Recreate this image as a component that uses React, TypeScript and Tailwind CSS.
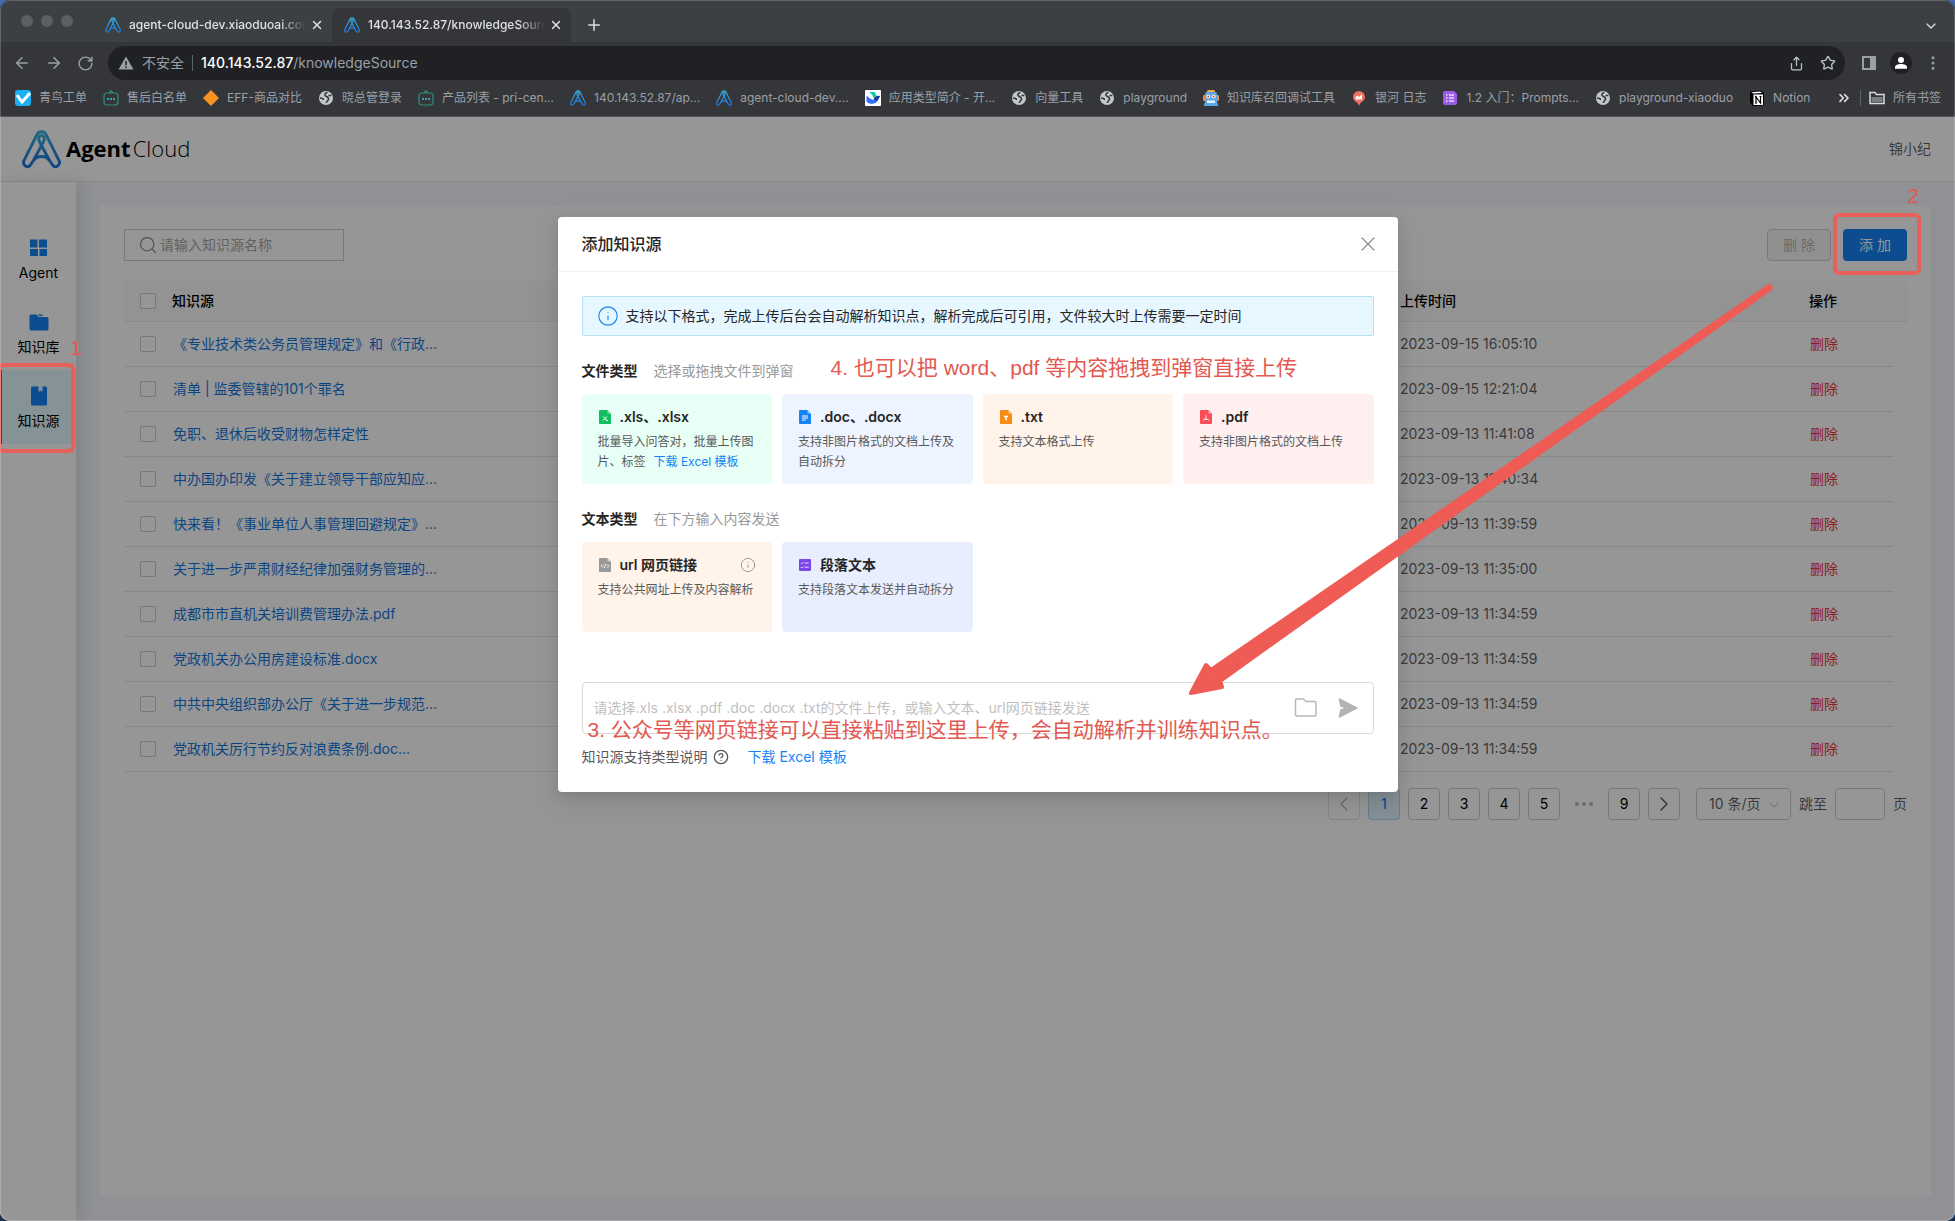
import { useState } from "react";
import type { ReactNode } from "react";
import {
  ArrowLeft,
  ArrowRight,
  ChevronDown,
  ChevronLeft,
  ChevronRight,
  ChevronsRight,
  CircleHelp,
  EllipsisVertical,
  Info,
  Plus,
  RotateCw,
  Search,
  Share,
  Star,
  X,
} from "lucide-react";

type Bookmark = { label: string; icon: ReactNode };
type Source = { name: string; time: string };

const sources: Source[] = [
  { name: "《专业技术类公务员管理规定》和《行政...", time: "2023-09-15 16:05:10" },
  { name: "清单 | 监委管辖的101个罪名", time: "2023-09-15 12:21:04" },
  { name: "免职、退休后收受财物怎样定性", time: "2023-09-13 11:41:08" },
  { name: "中办国办印发《关于建立领导干部应知应...", time: "2023-09-13 11:40:34" },
  { name: "快来看！《事业单位人事管理回避规定》...", time: "2023-09-13 11:39:59" },
  { name: "关于进一步严肃财经纪律加强财务管理的...", time: "2023-09-13 11:35:00" },
  { name: "成都市市直机关培训费管理办法.pdf", time: "2023-09-13 11:34:59" },
  { name: "党政机关办公用房建设标准.docx", time: "2023-09-13 11:34:59" },
  { name: "中共中央组织部办公厅《关于进一步规范...", time: "2023-09-13 11:34:59" },
  { name: "党政机关厉行节约反对浪费条例.doc...", time: "2023-09-13 11:34:59" },
];

const bookmarks: Bookmark[] = [
  { label: "青鸟工单", icon: <CheckIcon /> },
  { label: "售后白名单", icon: <BotIcon /> },
  { label: "EFF-商品对比", icon: <DiamondIcon /> },
  { label: "晓总管登录", icon: <GlobeIcon /> },
  { label: "产品列表 - pri-cen...", icon: <BotIcon /> },
  { label: "140.143.52.87/ap...", icon: <AgentLogo className="size-4" /> },
  { label: "agent-cloud-dev....", icon: <AgentLogo className="size-4" /> },
  { label: "应用类型简介 - 开...", icon: <FeishuIcon /> },
  { label: "向量工具", icon: <GlobeIcon /> },
  { label: "playground", icon: <GlobeIcon /> },
  { label: "知识库召回调试工具", icon: <RobotIcon /> },
  { label: "银河 日志", icon: <BalloonIcon /> },
  { label: "1.2 入门：Prompts...", icon: <FormIcon /> },
  { label: "playground-xiaoduo", icon: <GlobeIcon /> },
  { label: "Notion", icon: <NotionIcon /> },
];

export default function App() {
  return (
    <div className="flex min-h-screen flex-col bg-linear-to-b from-[#3f6cae] to-[#1b3350] font-['Inter','Noto_Sans_CJK_SC',sans-serif]">
      <div className="relative flex flex-1 flex-col overflow-hidden rounded-[10px]">
        <BrowserChrome />
        <div className="relative flex flex-1 flex-col bg-white text-sm">
          <Header />
          <div className="flex flex-1">
            <Sidebar />
            <main className="flex min-w-0 flex-1 bg-[#f4f7fc] px-6 pb-6 pt-[23px]">
              <SourceList />
            </main>
          </div>
          <div className="absolute inset-0 flex items-start justify-center bg-black/41 pt-[100px]">
            <UploadDialog />
          </div>
        </div>
        <Annotations />
        <div className="pointer-events-none absolute inset-0 rounded-[10px] border border-white/20" />
      </div>
    </div>
  );
}

function BrowserChrome() {
  return (
    <div className="bg-[#35363a] text-[#9aa0a6]">
      <div className="flex h-[42px] items-end bg-[#3c4043] pr-4">
        <div className="flex h-[42px] w-[93px] items-center gap-2 pl-[21px]">
          <span className="size-3 rounded-full bg-[#5c5f62]" />
          <span className="size-3 rounded-full bg-[#5c5f62]" />
          <span className="size-3 rounded-full bg-[#5c5f62]" />
        </div>
        <Tab title="agent-cloud-dev.xiaoduoai.com" />
        <Tab title="140.143.52.87/knowledgeSource" active />
        <button aria-label="新标签页" className="mb-2 ml-[14px] text-[#dadce0]">
          <Plus className="size-[18px]" />
        </button>
        <button aria-label="搜索标签页" className="mb-2 ml-auto text-[#dadce0]">
          <ChevronDown className="size-4" />
        </button>
      </div>

      <div className="flex h-[42px] items-center px-3">
        <button aria-label="后退" className="w-8 pl-px">
          <ArrowLeft className="size-[18px]" />
        </button>
        <button aria-label="前进" className="w-8 pl-px">
          <ArrowRight className="size-[18px]" />
        </button>
        <button aria-label="刷新" className="w-8 pl-px">
          <RotateCw className="size-[17px]" />
        </button>
        <div className="flex h-[34px] flex-1 items-center rounded-full bg-[#202124] pl-[10px] pr-px text-sm">
          <svg viewBox="0 0 16 16" className="size-4">
            <path d="M8 1.5 15.5 14.5H.5Z" fill="#9aa0a6" />
            <path d="M8 6v4.2M8 11.4v1.5" stroke="#202124" strokeWidth="1.5" />
          </svg>
          <span className="ml-2">不安全</span>
          <span className="mx-2 h-4 w-px bg-[#5f6368]" />
          <span>
            <span className="font-medium text-white">140.143.52.87</span>/knowledgeSource
          </span>
          <button aria-label="分享" className="ml-auto flex w-8 justify-center text-[#bdc1c6]">
            <Share className="size-[15px]" />
          </button>
          <button aria-label="收藏" className="flex w-8 justify-center text-[#bdc1c6]">
            <Star className="size-4" />
          </button>
        </div>
        <button aria-label="侧边栏" className="ml-2 flex w-8 justify-center">
          <svg viewBox="0 0 14 14" className="size-[14px]">
            <path d="M0 0h14v14H0zM2 2v10h6V2z" fill="#9aa0a6" fillRule="evenodd" />
          </svg>
        </button>
        <button aria-label="用户" className="flex w-8 justify-center">
          <svg viewBox="0 0 22 22" className="size-[22px]">
            <circle cx="11" cy="11" r="11" fill="#202124" />
            <circle cx="11" cy="8" r="3" fill="#fff" />
            <path d="M5 16.8v-1.6c0-2 3-3.2 6-3.2s6 1.2 6 3.2v1.6Z" fill="#fff" />
          </svg>
        </button>
        <button aria-label="更多" className="-mr-[6px] flex w-8 justify-center">
          <EllipsisVertical className="size-[18px]" />
        </button>
      </div>

      <nav className="flex h-[33px] items-center gap-4 border-b border-[#55575b] pb-1 pl-[15px] pr-[14px] text-xs">
        {bookmarks.map((b, i) => (
          <a key={i} href="#" className="flex shrink-0 items-center gap-2 whitespace-nowrap">
            {b.icon}
            {b.label}
          </a>
        ))}
        <div className="ml-auto flex shrink-0 items-center gap-2">
          <ChevronsRight className="size-4 text-[#dadce0]" strokeWidth={2.5} />
          <span className="h-4 w-px bg-[#5f6368]" />
          <a href="#" className="flex items-center gap-2">
            <svg viewBox="0 0 16 16" className="size-4">
              <path d="M1 2.5h5l1.5 2H15v9H1z" fill="none" stroke="#dadce0" strokeWidth="1.5" />
              <path d="M2.5 7h11v5h-11z" fill="#7b7e82" />
            </svg>
            所有书签
          </a>
        </div>
      </nav>
    </div>
  );
}

function Tab({ title, active = false }: { title: string; active?: boolean }) {
  return (
    <div
      className={`flex h-[34px] w-[239px] items-center rounded-t-lg pl-3 pr-2 text-xs font-medium text-[#dfe1e5] ${
        active ? "bg-[#35363a]" : ""
      }`}
    >
      <AgentLogo className="size-4 shrink-0" />
      <span className="ml-2 flex-1 overflow-hidden whitespace-nowrap mask-r-from-85% mask-r-to-100%">{title}</span>
      <button aria-label="关闭标签页" className="ml-1">
        <X className="size-[14px]" strokeWidth={2.5} />
      </button>
    </div>
  );
}

function Header() {
  return (
    <header className="flex h-[65px] items-center border-b border-[#e8e8e8] pl-[22px] pr-6">
      <AgentLogo className="size-[39px]" />
      <div className="ml-[5px] font-['Open_Sans',sans-serif] text-[22px] text-black">
        <span className="font-bold">Agent</span>
        <span className="ml-0.5 font-light">Cloud</span>
      </div>
      <span className="ml-auto text-black/65">锦小纪</span>
    </header>
  );
}

function Sidebar() {
  return (
    <aside className="relative w-[76px] shrink-0 bg-white pt-10 shadow-[4px_0_16px_rgba(0,21,41,0.12)]">
      <NavItem label="Agent">
        <path d="M1 1.5h7.5v8H1zM10 1.5h8v8h-8zM1 11h8v7H1zM10.5 11H18v7h-7.500z" />
      </NavItem>
      <NavItem label="知识库">
        <path d="M2 2.500h5.500l2.200 2.500H18a1.500 1.500 0 0 1 1.500 1.500V17A1.500 1.500 0 0 1 18 18.500H2A1.500 1.500 0 0 1 .5 17V4A1.500 1.500 0 0 1 2 2.500zM9 2.500h4.500V4h-3.200z" />
      </NavItem>
      <NavItem label="知识源" active>
        <path d="M3.500.5H9.500v5.500l2-1.500 2 1.500V.5h3A1.500 1.500 0 0 1 18 2v16a1.500 1.500 0 0 1-1.500 1.500h-13A1.500 1.500 0 0 1 2 18V2A1.500 1.500 0 0 1 3.500.5z" />
      </NavItem>
    </aside>
  );
}

function NavItem({ label, active = false, children }: { label: string; active?: boolean; children: ReactNode }) {
  return (
    <a
      href="#"
      className={`flex h-[74px] flex-col items-center border-l-2 pr-px pt-4 text-black ${
        active ? "border-[#1484f5] bg-[#e3f9ff]" : "border-transparent"
      }`}
    >
      <svg viewBox="0 0 20 20" className="size-5 fill-[#1484f5]">
        {children}
      </svg>
      <span className="mt-1 leading-[22px]">{label}</span>
    </a>
  );
}

function SourceList() {
  const [selected, setSelected] = useState<string[]>([]);

  const toggle = (name: string) =>
    setSelected(selected.includes(name) ? selected.filter((n) => n !== name) : [...selected, name]);

  return (
    <section className="flex-1 rounded bg-white p-6">
      <div className="flex items-center gap-3">
        <label className="mr-auto flex h-8 w-[220px] items-center gap-0.5 border border-[#d0d0d0] pl-[13px]">
          <Search className="size-5 shrink-0 text-[#8c8c8c]" strokeWidth={1.5} />
          <input
            type="text"
            aria-label="知识源名称"
            placeholder="请输入知识源名称"
            className="w-full outline-none placeholder:text-[#a6a6a6]"
          />
        </label>
        <button disabled className="h-8 w-16 rounded border border-[#d0d0d0] bg-[#f5f5f5] text-black/30">
          删 除
        </button>
        <button className="h-8 w-16 rounded bg-[#1484f5] text-white">添 加</button>
      </div>

      <table className="mt-5 w-full table-fixed border-separate border-spacing-0 text-left">
        <thead>
          <tr className="h-[41px] text-black *:border-b *:border-[#ececec] *:bg-[#fafafa]">
            <th className="w-12 pl-4">
              <Checkbox label="全选" />
            </th>
            <th className="font-medium">知识源</th>
            <th className="w-[23%] pl-[17px] font-medium">上传时间</th>
            <th className="w-[100px] pl-4 font-medium">操作</th>
            <th className="w-[14px]" />
          </tr>
        </thead>
        <tbody>
          {sources.map((s) => (
            <tr key={s.name} className="h-[45px]">
              <td className="border-b border-[#e6e6e6] pl-4">
                <Checkbox label={s.name} checked={selected.includes(s.name)} onChange={() => toggle(s.name)} />
              </td>
              <td className="border-b border-[#e6e6e6] pl-px">
                <a href="#" className="text-[#1677dd]">
                  {s.name}
                </a>
              </td>
              <td className="border-b border-[#e6e6e6] pl-[17px] text-black/65">{s.time}</td>
              <td className="border-b border-[#e6e6e6] pl-[17px]">
                <button className="text-[#f0343c]">删除</button>
              </td>
              <td />
            </tr>
          ))}
        </tbody>
      </table>

      <Pagination />
    </section>
  );
}

function Checkbox({ label, checked = false, onChange }: { label: string; checked?: boolean; onChange?: () => void }) {
  return (
    <input
      type="checkbox"
      aria-label={label}
      checked={checked}
      onChange={onChange ?? (() => {})}
      className="block size-4 appearance-none rounded-xs border border-[#ccc] bg-white checked:bg-[#1484f5]"
    />
  );
}

function Pagination() {
  const page = "flex size-8 items-center justify-center rounded border";

  return (
    <div className="mt-4 flex items-center justify-end gap-2 text-black">
      <button disabled aria-label="上一页" className={`${page} border-[#e0e0e0] text-black/30`}>
        <ChevronLeft className="size-6" strokeWidth={1.25} />
      </button>
      <button className={`${page} border-[#a8d8ee] bg-[#e0f5ff] font-medium text-[#1484f5]`}>1</button>
      {["2", "3", "4", "5"].map((n) => (
        <button key={n} className={`${page} border-[#d0d0d0]`}>
          {n}
        </button>
      ))}
      <span className="flex size-8 items-center justify-center gap-[3px]">
        <i className="size-1 rounded-full bg-[#b8b8b8]" />
        <i className="size-1 rounded-full bg-[#b8b8b8]" />
        <i className="size-1 rounded-full bg-[#b8b8b8]" />
      </span>
      <button className={`${page} border-[#d0d0d0]`}>9</button>
      <button aria-label="下一页" className={`${page} border-[#d0d0d0] text-black/70`}>
        <ChevronRight className="size-6" strokeWidth={1.25} />
      </button>
      <div className="relative ml-2">
        <select
          aria-label="每页条数"
          className="h-8 w-[95px] appearance-none rounded border border-[#d0d0d0] bg-white pl-3 text-black/65"
        >
          <option>10 条/页</option>
          <option>20 条/页</option>
        </select>
        <ChevronDown className="pointer-events-none absolute right-2 top-2 size-[18px] text-[#b0b0b0]" strokeWidth={1.25} />
      </div>
      <label htmlFor="jump" className="text-black/65">
        跳至
      </label>
      <input id="jump" type="text" className="h-8 w-[50px] rounded border border-[#d0d0d0] px-2" />
      <span className="text-black/65">页</span>
    </div>
  );
}

function UploadDialog() {
  return (
    <div
      role="dialog"
      aria-label="添加知识源"
      className="w-[840px] rounded-sm bg-white text-[#262626] shadow-[0_3px_6px_-4px_rgba(0,0,0,0.12),0_6px_16px_rgba(0,0,0,0.08),0_9px_28px_8px_rgba(0,0,0,0.05)]"
    >
      <div className="flex h-[55px] items-center justify-between border-b border-[#f0f0f0] px-6">
        <h2 className="text-base font-medium">添加知识源</h2>
        <button aria-label="关闭" className="-mr-[6px] text-[#8c8c8c]">
          <X className="size-6" strokeWidth={1.25} />
        </button>
      </div>

      <div className="px-6 pb-[25px] pt-6">
        <div className="flex h-10 items-center gap-[7px] rounded-xs border border-[#b7e0f2] bg-[#e6f7ff] px-[14px]">
          <Info className="size-[22px] text-[#1484f5]" strokeWidth={1.25} />
          支持以下格式，完成上传后台会自动解析知识点，解析完成后可引用，文件较大时上传需要一定时间
        </div>

        <SectionTitle title="文件类型" hint="选择或拖拽文件到弹窗" />
        <div className="mt-3 grid grid-cols-4 gap-[10px]">
          <TypeCard
            color="bg-[#e8fff6]"
            title=".xls、.xlsx"
            icon={
              <FileIcon color="#0fbf60">
                <path d="m4 6.5 4 4M8 6.5l-4 4M7 10.5h2" />
              </FileIcon>
            }
          >
            批量导入问答对，批量上传图片、标签
            <a href="#" className="ml-2 text-[#1484f5]">
              下载 Excel 模板
            </a>
          </TypeCard>
          <TypeCard
            color="bg-[#edf4ff]"
            title=".doc、.docx"
            icon={
              <FileIcon color="#1484f5">
                <path d="M3 6h6M3 8h6M3 10h3.5" />
              </FileIcon>
            }
          >
            支持非图片格式的文档上传及自动拆分
          </TypeCard>
          <TypeCard
            color="bg-[#fff3ea]"
            title=".txt"
            icon={
              <FileIcon color="#fa8c16">
                <path d="M4 6.5h4M6 6.5v4" strokeWidth="1.5" />
              </FileIcon>
            }
          >
            支持文本格式上传
          </TypeCard>
          <TypeCard
            color="bg-[#ffefef]"
            title=".pdf"
            icon={
              <FileIcon color="#fa4d56">
                <path d="M6 5v2.500L3 10.500M6 7.500c.6 1.800 1.800 2.500 3.500 2.500M4 9.500h3.500" strokeWidth=".8" />
              </FileIcon>
            }
          >
            支持非图片格式的文档上传
          </TypeCard>
        </div>

        <SectionTitle title="文本类型" hint="在下方输入内容发送" />
        <div className="mt-3 grid grid-cols-4 gap-[10px]">
          <TypeCard
            color="bg-[#fff3ea]"
            title="url 网页链接"
            info
            icon={
              <FileIcon color="#999">
                <path d="M3.800 6.500 2.300 8l1.500 1.500M8.200 6.500 9.700 8 8.200 9.500M6.600 6 5.400 10" strokeWidth=".9" />
              </FileIcon>
            }
          >
            支持公共网址上传及内容解析
          </TypeCard>
          <TypeCard
            color="bg-[#e9eeff]"
            title="段落文本"
            icon={
              <svg viewBox="0 0 12 14" className="h-[14px] w-3 shrink-0">
                <rect y="1" width="12" height="12" rx="1" fill="#7b45e8" />
                <path d="m2 5 .8.8L4.300 4.300M2 9.200l.8.8 1.500-1.500M5.500 5h4.200M5.500 9.200h4.200" stroke="#fff" strokeWidth=".8" fill="none" />
              </svg>
            }
          >
            支持段落文本发送并自动拆分
          </TypeCard>
        </div>

        <div className="mt-[50px] flex h-[52px] items-center rounded border border-[#d9d9d9] pl-[11px] pr-[15px]">
          <input
            type="text"
            aria-label="上传内容"
            placeholder="请选择.xls .xlsx .pdf .doc .docx .txt的文件上传，或输入文本、url网页链接发送"
            className="flex-1 outline-none placeholder:text-[#bfbfbf]"
          />
          <button aria-label="选择文件">
            <svg viewBox="0 0 24 20" className="h-5 w-6" fill="none" stroke="#b8b8b8" strokeWidth="1.5">
              <path d="M2.500 1h6.700l2.800 2.500h9a1 1 0 0 1 1 1v12.500a1 1 0 0 1-1 1h-18.500a1 1 0 0 1-1-1v-15a1 1 0 0 1 1-1z" />
            </svg>
          </button>
          <button aria-label="发送" className="ml-5">
            <svg viewBox="0 0 20 20" className="size-5">
              <path d="M1 .5 19.500 10 1 19.500 2.700 11.500 9 10 2.700 8.500Z" fill="#b3b3b3" stroke="#b3b3b3" strokeLinejoin="round" />
            </svg>
          </button>
        </div>
        <div className="mt-[13px] flex items-center text-[#595959]">
          知识源支持类型说明
          <CircleHelp className="ml-[5px] size-4" />
          <a href="#" className="ml-[19px] text-[#1484f5]">
            下载 Excel 模板
          </a>
        </div>
      </div>
    </div>
  );
}

function SectionTitle({ title, hint }: { title: string; hint: string }) {
  return (
    <div className="mt-6 flex gap-4 leading-[22px]">
      <h3 className="font-semibold">{title}</h3>
      <span className="text-[#999]">{hint}</span>
    </div>
  );
}

function TypeCard({
  color,
  title,
  icon,
  info = false,
  children,
}: {
  color: string;
  title: string;
  icon: ReactNode;
  info?: boolean;
  children: ReactNode;
}) {
  return (
    <div className={`h-[90px] rounded px-4 pt-3 ${color}`}>
      <div className="flex items-center gap-[9px] pl-px leading-[22px]">
        {icon}
        <h4 className="font-semibold">{title}</h4>
        {info && <Info className="ml-auto size-4 text-[#8c8c8c]" strokeWidth={1.25} />}
      </div>
      <p className="mt-1 text-xs leading-5 text-[#595959]">{children}</p>
    </div>
  );
}

// numbered steps drawn on top of everything
function Annotations() {
  return (
    <div className="pointer-events-none absolute inset-0 font-['Liberation_Sans','Noto_Sans_CJK_SC',sans-serif] text-[21px] leading-7 text-[#e35850]">
      <div className="absolute left-[-3px] top-[363px] h-[90px] w-[78px] rounded-md border-4 border-[#e8605a]" />
      <span className="absolute left-[70px] top-[334px]">1</span>
      <div className="absolute right-[34px] top-[213px] h-[62px] w-[88px] rounded-md border-4 border-[#e8605a]" />
      <span className="absolute right-[36px] top-[182px]">2</span>
      <svg className="absolute left-1/2 top-[270px] h-[440px] w-[600px] translate-x-[202px]" viewBox="1180 270 600 440">
        <path
          d="M1769 286 1211 670 1206 665 1191 693 1222 687 1220 681 1771 288Z"
          fill="#ef5b55"
          stroke="#ef5b55"
          strokeWidth="4"
          strokeLinejoin="round"
        />
      </svg>
      <div className="absolute left-1/2 top-[354px] ml-[-147px] whitespace-nowrap">
        4. 也可以把 word、pdf 等内容拖拽到弹窗直接上传
      </div>
      <div className="absolute left-1/2 top-[716px] ml-[-390px] whitespace-nowrap">
        3. 公众号等网页链接可以直接粘贴到这里上传，会自动解析并训练知识点。
      </div>
    </div>
  );
}

function AgentLogo({ className }: { className: string }) {
  return (
    <svg viewBox="0 0 40 40" className={className} fill="none" stroke="url(#agent-logo)" strokeWidth="3" strokeLinejoin="round">
      <defs>
        <linearGradient id="agent-logo" x1="0" y1="0" x2="0" y2="1">
          <stop offset="0" stopColor="#38b0dc" />
          <stop offset="1" stopColor="#1c78dc" />
        </linearGradient>
      </defs>
      <path d="M15.500 4.500C17.500 1 22.500 1 24.500 4.500L38 31.500C40 35.500 34.500 40 31.500 36L28 31C24.500 26 15.500 26 12 31L8.500 36C5.500 40 0 35.500 2 31.500Z" />
      <path d="M12 31 21.800 12.500C24 8.500 22.500 5.500 20 5.500S16 8.500 18.200 12.500L28 31" />
    </svg>
  );
}

function FileIcon({ color, children }: { color: string; children: ReactNode }) {
  return (
    <svg viewBox="0 0 12 14" className="h-[14px] w-3 shrink-0">
      <path d="M1 0h7.500L12 3.500V13a1 1 0 0 1-1 1H1a1 1 0 0 1-1-1V1a1 1 0 0 1 1-1z" fill={color} />
      <path d="M8.500 0 12 3.500H8.500z" fill="#fff" opacity=".5" />
      <g stroke="#fff" fill="none">
        {children}
      </g>
    </svg>
  );
}

function CheckIcon() {
  return (
    <svg viewBox="0 0 16 16" className="size-4">
      <rect width="16" height="16" rx="3" fill="#1bb0f5" />
      <path d="m2 5 5 7 8-9" fill="none" stroke="#fff" strokeWidth="3" />
    </svg>
  );
}

function BotIcon() {
  return (
    <svg viewBox="0 0 16 16" className="size-4" fill="none">
      <path d="M4 3h8a3 3 0 0 1 3 3v6a3 3 0 0 1-3 3H4a3 3 0 0 1-3-3V6a3 3 0 0 1 3-3zM6 3l2-2.300L10 3" stroke="#2f8f7c" strokeWidth="1.200" />
      <path d="M4 9h2M7 9h2M10 9h2" stroke="#3f9fb0" strokeWidth="2" />
    </svg>
  );
}

function DiamondIcon() {
  return (
    <svg viewBox="0 0 16 16" className="size-4">
      <path d="m8 0 8 8-8 8-8-8z" fill="#f7931e" />
    </svg>
  );
}

function GlobeIcon() {
  return (
    <svg viewBox="0 0 16 16" className="size-4">
      <circle cx="8" cy="8" r="7" fill="#c4c7cb" />
      <path d="M9.500 2.500C6.500 3 6 5.500 8 6.300s3 1.200 2.500 3-2 2-2.300 3.500M2 8c2 0 3.500.5 3.500 2M10.500 5.500h3" fill="none" stroke="#35363a" strokeWidth="1.500" />
    </svg>
  );
}

function FeishuIcon() {
  return (
    <svg viewBox="0 0 16 16" className="size-4">
      <rect width="16" height="16" rx="1" fill="#fff" />
      <path d="M4.500 2h5c1 1 1.600 2.300 2 3.800L9 8.500C8 6 6.500 4 4.500 2z" fill="#12c9b0" />
      <path d="M1.500 5.500C4 8 7 10 9.500 10c2 0 3-1.500 4-3 .7-.8 1.500-.8 1.500-.8-1 1.500-1.500 4-3 5.500-3 3-8 2.500-10.500 0z" fill="#3370ff" />
      <path d="M8.500 9.500c1.200-2.500 3.500-4.500 6.500-3.300-1 1.500-2 4.300-3.800 4.300-1 0-2-.4-2.700-1z" fill="#133c9a" />
    </svg>
  );
}

function RobotIcon() {
  return (
    <svg viewBox="0 0 16 16" className="size-4">
      <rect x="4" width="8" height="3" rx="1.500" fill="#f2b13c" />
      <rect y="5" width="3" height="6" rx="1" fill="#e98a4a" />
      <rect x="13" y="5" width="3" height="6" rx="1" fill="#e98a4a" />
      <path d="M2 4a2 2 0 0 1 2-2h8a2 2 0 0 1 2 2v8l1.500 4H.5L2 12z" fill="#5aa7e6" />
      <circle cx="5.300" cy="6.500" r="1.900" fill="#fff" />
      <circle cx="10.700" cy="6.500" r="1.900" fill="#fff" />
      <circle cx="5.300" cy="6.500" r=".9" fill="#c0392b" />
      <circle cx="10.700" cy="6.500" r=".9" fill="#c0392b" />
      <rect x="4" y="10.500" width="8" height="2.500" fill="#dff0ff" />
    </svg>
  );
}

function BalloonIcon() {
  return (
    <svg viewBox="0 0 16 16" className="size-4">
      <path d="M8 1a6 6 0 0 1 6 6c0 3-2.500 4.500-4 5.500L8 15.500 6 12.500C4.500 11.500 2 10 2 7a6 6 0 0 1 6-6z" fill="#f0705e" />
      <path d="M4.500 9.500V7l2-1.500L8 7l3-3v5.500z" fill="#fff" />
    </svg>
  );
}

function FormIcon() {
  return (
    <svg viewBox="0 0 16 16" className="size-4">
      <path d="M3 1h9l3 3v9a2 2 0 0 1-2 2H3a2 2 0 0 1-2-2V3a2 2 0 0 1 2-2z" fill="#9b5de5" />
      <path d="M4 5h1.500M4 8h1.500M4 11h1.500M7 5h5M7 8h5M7 11h5" stroke="#e9dcff" strokeWidth="1.300" />
    </svg>
  );
}

function NotionIcon() {
  return (
    <svg viewBox="0 0 16 16" className="size-4">
      <path d="M1 1.500 11.500.5 15 3v12.500L4 16 1 12.500z" fill="#000" />
      <path d="M2.200 2.300 11 1.500l2 1.500-8.500.6z" fill="#fff" />
      <rect x="4.500" y="4.500" width="9.500" height="10.500" fill="#fff" />
      <path d="M7 13V7l4.500 6V6.500M6 6.800h2M10.500 6.500h2M6 13h2" stroke="#000" fill="none" strokeWidth="1.200" />
    </svg>
  );
}
